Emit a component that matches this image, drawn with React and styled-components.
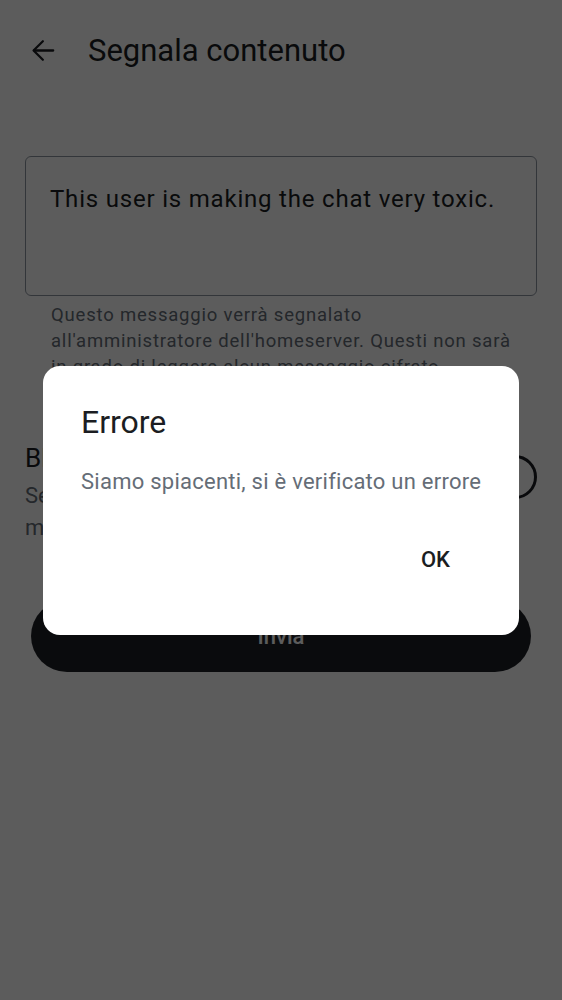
import React from 'react';
import styled, { createGlobalStyle } from 'styled-components';

const GlobalStyle = createGlobalStyle`
    html, body {
        margin: 0;
        padding: 0;
        background: #ffffff;
        font-family: Roboto, "Noto Sans", "Liberation Sans", sans-serif;
    }
`;

const Page = styled.div`
    width: 562px;
    min-height: 1000px;
    background: #ffffff;
    color: #1b1d22;
`;

const TopBar = styled.div`
    display: flex;
    align-items: center;
    height: 100px;
    padding: 0 0 0 28px;
    gap: 29px;
    box-sizing: border-box;
`;

const BackButton = styled.button`
    display: flex;
    align-items: center;
    justify-content: center;
    width: 31px;
    height: 31px;
    padding: 0;
    border: none;
    background: none;
    color: #1b1d22;
`;

const Title = styled.h1`
    margin: 0;
    font-size: 31px;
    font-weight: 400;
    color: #1b1d22;
`;

const Content = styled.div`
    padding: 56px 25px 0;
`;

const TextBox = styled.div`
    height: 140px;
    border: 1.5px solid #8f97a2;
    border-radius: 6px;
    box-sizing: border-box;
    padding: 27px 24px;
    font-size: 24px;
    line-height: 30px;
    letter-spacing: 0.8px;
    color: #1b1d22;
`;

const Helper = styled.p`
    margin: 6px 0 0;
    padding: 0 18px 0 26px;
    font-size: 18.5px;
    line-height: 26px;
    letter-spacing: 0.8px;
    color: #656d77;
`;

const SwitchRow = styled.div`
    display: flex;
    align-items: flex-start;
    justify-content: space-between;
    margin-top: 62px;
    gap: 20px;
`;

const RowText = styled.div`
    flex: 1;
`;

const RowTitle = styled.div`
    font-size: 26px;
    line-height: 32px;
    color: #1b1d22;
`;

const RowDesc = styled.div`
    margin-top: 6px;
    font-size: 22px;
    line-height: 32px;
    color: #656d77;
`;

const Track = styled.div`
    flex-shrink: 0;
    width: 71px;
    height: 44px;
    margin-top: 13px;
    border: 3px solid #1b1d22;
    border-radius: 22px;
    box-sizing: border-box;
    display: flex;
    align-items: center;
    padding-left: 8px;
`;

const Thumb = styled.div`
    width: 22px;
    height: 22px;
    border-radius: 50%;
    background: #1b1d22;
`;

const SubmitButton = styled.button`
    display: block;
    width: 500px;
    height: 72px;
    margin: 56px auto 0;
    border: none;
    border-radius: 36px;
    background: #1e2026;
    color: #ffffff;
    font-family: inherit;
    font-size: 22px;
    font-weight: 500;
`;

const Scrim = styled.div`
    position: fixed;
    inset: 0;
    background: rgba(0, 0, 0, 0.64);
    display: flex;
    align-items: center;
    justify-content: center;
`;

const Dialog = styled.div`
    width: 476px;
    height: 269px;
    box-sizing: border-box;
    background: #ffffff;
    border-radius: 17px;
    padding: 36px 28px 0 38px;
    display: flex;
    flex-direction: column;
`;

const DialogTitle = styled.h2`
    margin: 0;
    font-size: 32px;
    font-weight: 400;
    line-height: 40px;
    color: #1b1d22;
`;

const DialogBody = styled.p`
    margin: 25px 0 0;
    font-size: 22px;
    line-height: 30px;
    letter-spacing: 0.25px;
    white-space: nowrap;
    color: #656d77;
`;

const Actions = styled.div`
    display: flex;
    justify-content: flex-end;
    margin-top: 44px;
`;

const TextButton = styled.button`
    border: none;
    background: none;
    padding: 6px 41px 6px 20px;
    font-family: inherit;
    font-size: 22px;
    font-weight: 500;
    color: #1b1d22;
`;

const ArrowIcon = () => (
    <svg width="31" height="31" viewBox="0 0 24 24" fill="none" stroke="currentColor" strokeWidth="1.75" strokeLinecap="round" strokeLinejoin="round">
        <path d="M19.5 12H4.8" />
        <path d="M11.5 4.8L4.3 12l7.2 7.2" />
    </svg>
);

const App = () => {
    return (
        <>
            <GlobalStyle />
            <Page>
                <TopBar>
                    <BackButton><ArrowIcon /></BackButton>
                    <Title>Segnala contenuto</Title>
                </TopBar>
                <Content>
                    <TextBox>This user is making the chat very toxic.</TextBox>
                    <Helper>
                        Questo messaggio verrà segnalato all'amministratore dell'homeserver. Questi non sarà in grado di leggere alcun messaggio cifrato.
                    </Helper>
                    <SwitchRow>
                        <RowText>
                            <RowTitle>Blocca utente</RowTitle>
                            <RowDesc>Seleziona se vuoi nascondere tutti i messaggi attuali e futuri di questo utente</RowDesc>
                        </RowText>
                        <Track><Thumb /></Track>
                    </SwitchRow>
                </Content>
                <SubmitButton>Invia</SubmitButton>
            </Page>
            <Scrim>
                <Dialog>
                    <DialogTitle>Errore</DialogTitle>
                    <DialogBody>Siamo spiacenti, si è verificato un errore</DialogBody>
                    <Actions>
                        <TextButton>OK</TextButton>
                    </Actions>
                </Dialog>
            </Scrim>
        </>
    );
}

export default App;
